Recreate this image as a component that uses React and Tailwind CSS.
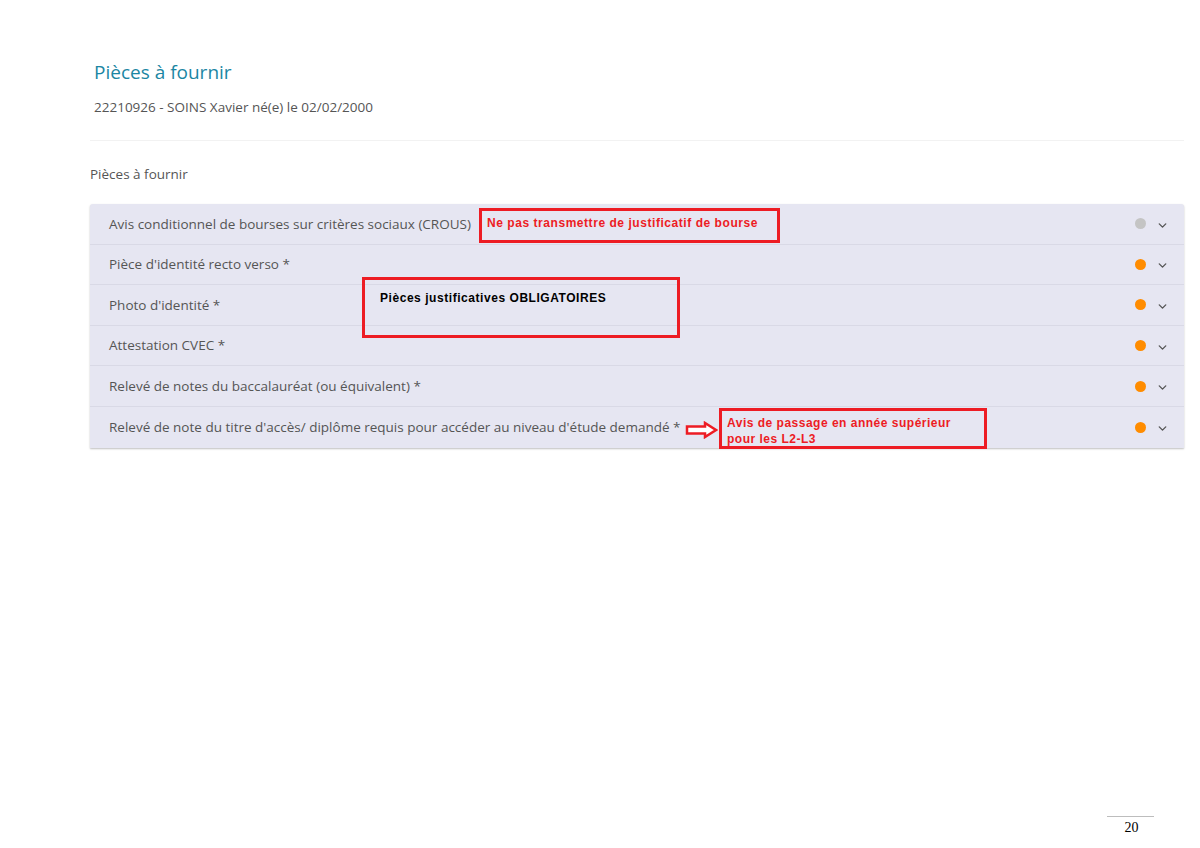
import { ChevronDown } from "lucide-react";

const rows = [
  { label: "Avis conditionnel de bourses sur critères sociaux (CROUS)", status: "none" },
  { label: "Pièce d'identité recto verso *", status: "todo" },
  { label: "Photo d'identité *", status: "todo" },
  { label: "Attestation CVEC *", status: "todo" },
  { label: "Relevé de notes du baccalauréat (ou équivalent) *", status: "todo" },
  {
    label:
      "Relevé de note du titre d'accès/ diplôme requis pour accéder au niveau d'étude demandé *",
    status: "todo",
  },
];

const note = { fontFamily: '"Liberation Sans", Arial, sans-serif' };

function Row({ label, status, last }) {
  return (
    <div
      className={`flex items-center h-[40.6px] pl-[19px] pr-[15px] ${
        last ? "" : "border-b border-[#d9d9e6]"
      }`}
    >
      <span className="flex-1 text-[13.5px] text-[#555]">{label}</span>
      <span
        className={`w-[11px] h-[11px] rounded-full ${
          status === "none" ? "bg-[#c4c4c4]" : "bg-[#ff8c00]"
        }`}
      />
      <ChevronDown size={13} strokeWidth={2.5} className="ml-[10px] mt-[3px] text-[#555]" />
    </div>
  );
}

export default function App() {
  return (
    <div
      className="relative w-[1200px] h-[848px] bg-white overflow-hidden"
      style={{ fontFamily: '"Open Sans", sans-serif' }}
    >
      <div className="pl-[94px] pt-[60px]">
        <h1 className="text-[19px] leading-[24px] text-[#1b86a3]">Pièces à fournir</h1>
        <p className="mt-[13px] text-[13.5px] leading-[20px] text-[#555]">
          22210926 - SOINS Xavier né(e) le 02/02/2000
        </p>
      </div>
      <div className="mt-[23px] ml-[90px] mr-[16px] border-t border-[#f2f2f2]" />

      <div className="ml-[90px] mr-[16px]">
        <p className="pt-[23px] text-[13.5px] leading-[20px] text-[#555]">Pièces à fournir</p>
        <div className="mt-[20px] bg-[#e6e6f2] rounded-t-[3px] shadow-[0_1px_2px_rgba(0,0,0,0.25)]">
          {rows.map((r, i) => (
            <Row key={i} {...r} last={i === rows.length - 1} />
          ))}
        </div>
      </div>

      {/* annotations */}
      <div
        className="absolute left-[479px] top-[208px] w-[301px] h-[35px] border-[3px] border-[#ed1c24] px-[5px] pt-[5px] text-[12px] leading-[14px] tracking-[0.55px] font-bold text-[#ed1c24]"
        style={note}
      >
        Ne pas transmettre de justificatif de bourse
      </div>
      <div
        className="absolute left-[362px] top-[277px] w-[318px] h-[61px] border-[3px] border-[#ed1c24] pl-[15px] pt-[11px] text-[12px] leading-[14px] tracking-[0.55px] font-bold text-black"
        style={note}
      >
        Pièces justificatives OBLIGATOIRES
      </div>
      <svg
        className="absolute left-[685px] top-[421px]"
        width="33"
        height="18"
        viewBox="0 0 33 18"
      >
        <path
          d="M2 5.5 H20 V2 L31 9 L20 16 V12.5 H2 Z"
          fill="white"
          stroke="#ed1c24"
          strokeWidth="2.5"
        />
      </svg>
      <div
        className="absolute left-[719px] top-[408px] w-[268px] h-[41px] border-[3px] border-[#ed1c24] pl-[5px] pt-[4px] text-[12px] leading-[16px] tracking-[0.5px] font-bold text-[#ed1c24]"
        style={note}
      >
        Avis de passage en année supérieur
        <br />
        pour les L2-L3
      </div>

      <div className="absolute left-[1107px] top-[816px] w-[47px] flex flex-col items-center border-t border-[#bdbdbd]">
        <span
          className="pt-[2px] pl-[2px] text-[14px] leading-[18px] text-black"
          style={{ fontFamily: '"Liberation Serif", serif' }}
        >
          20
        </span>
      </div>
    </div>
  );
}
